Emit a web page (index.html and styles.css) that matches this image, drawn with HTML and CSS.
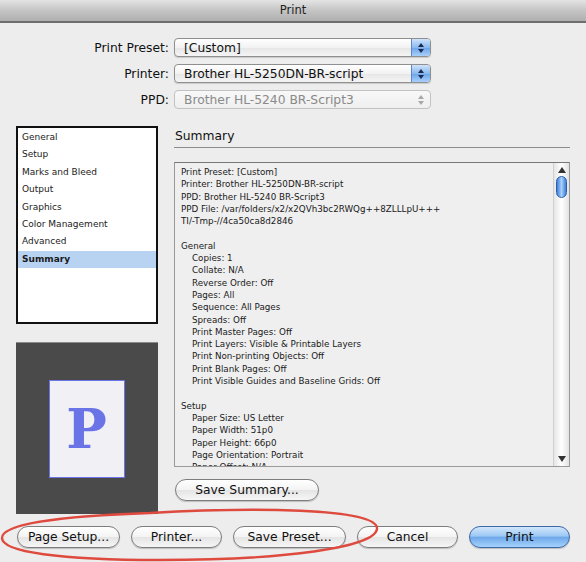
FILE: index.html
```html
<!DOCTYPE html>
<html>
<head>
<meta charset="utf-8">
<link rel="stylesheet" href="styles.css">
</head>
<body>
<div class="window">
  <div class="titlebar">Print</div>
  <div class="top">
    <div class="row">
      <span class="label">Print Preset:</span>
      <div class="popup"><span class="ptext">[Custom]</span><span class="arrows"><svg width="8" height="12" viewBox="0 0 8 12"><path d="M4 1 L7 5 H1 Z M4 11 L7 7 H1 Z" fill="#1a2a50"/></svg></span></div>
    </div>
    <div class="row">
      <span class="label">Printer:</span>
      <div class="popup"><span class="ptext">Brother HL-5250DN-BR-script</span><span class="arrows"><svg width="8" height="12" viewBox="0 0 8 12"><path d="M4 1 L7 5 H1 Z M4 11 L7 7 H1 Z" fill="#1a2a50"/></svg></span></div>
    </div>
    <div class="row">
      <span class="label">PPD:</span>
      <div class="popup disabled"><span class="ptext">Brother HL-5240 BR-Script3</span><span class="arrows"><svg width="8" height="12" viewBox="0 0 8 12"><path d="M4 1 L7 5 H1 Z M4 11 L7 7 H1 Z" fill="#a8a8a8"/></svg></span></div>
    </div>
  </div>
  <div class="main">
    <div class="sidebar">
      <ul class="list">
        <li>General</li>
        <li>Setup</li>
        <li>Marks and Bleed</li>
        <li>Output</li>
        <li>Graphics</li>
        <li>Color Management</li>
        <li>Advanced</li>
        <li class="sel">Summary</li>
      </ul>
      <div class="preview">
        <div class="page">P</div>
      </div>
    </div>
    <div class="content">
      <div class="heading">Summary</div>
      <div class="textbox">
        <div class="text">
          <div>Print Preset: [Custom]</div>
          <div>Printer: Brother HL-5250DN-BR-script</div>
          <div>PPD: Brother HL-5240 BR-Script3</div>
          <div>PPD File: /var/folders/x2/x2QVh3bc2RWQg++8ZLLLpU+++</div>
          <div>TI/-Tmp-//4ca50ca8d2846</div>
          <div class="blank"></div>
          <div>General</div>
          <div class="ind">Copies: 1</div>
          <div class="ind">Collate: N/A</div>
          <div class="ind">Reverse Order: Off</div>
          <div class="ind">Pages: All</div>
          <div class="ind">Sequence: All Pages</div>
          <div class="ind">Spreads: Off</div>
          <div class="ind">Print Master Pages: Off</div>
          <div class="ind">Print Layers: Visible &amp; Printable Layers</div>
          <div class="ind">Print Non-printing Objects: Off</div>
          <div class="ind">Print Blank Pages: Off</div>
          <div class="ind">Print Visible Guides and Baseline Grids: Off</div>
          <div class="blank"></div>
          <div>Setup</div>
          <div class="ind">Paper Size: US Letter</div>
          <div class="ind">Paper Width: 51p0</div>
          <div class="ind">Paper Height: 66p0</div>
          <div class="ind">Page Orientation: Portrait</div>
          <div class="ind">Paper Offset: N/A</div>
        </div>
        <div class="scrollbar">
          <svg class="sarrow" width="8" height="6" viewBox="0 0 8 6"><path d="M4 0 L8 6 H0 Z" fill="#333"/></svg>
          <div class="thumb"></div>
          <div class="track"></div>
          <svg class="sarrow" width="8" height="6" viewBox="0 0 8 6"><path d="M4 6 L8 0 H0 Z" fill="#333"/></svg>
        </div>
      </div>
      <div class="btnrow"><button class="btn summary">Save Summary...</button></div>
    </div>
  </div>
  <div class="buttons">
    <button class="btn w103">Page Setup...</button>
    <button class="btn w91">Printer...</button>
    <button class="btn w113">Save Preset...</button>
    <button class="btn w101">Cancel</button>
    <button class="btn w101 primary">Print</button>
  </div>
  <svg class="annot" width="586" height="562" viewBox="0 0 586 562">
    <path d="M 150 513 C 250 507, 375 508, 377 528 C 378 548, 280 560, 160 560 C 60 560, 2 552, 2 538 C 2 524, 60 516, 150 513 Z" fill="none" stroke="#de4a3e" stroke-width="2.4"/>
  </svg>
</div>
</body>
</html>
```
FILE: styles.css
```css
* { box-sizing: border-box; }
html, body { margin: 0; padding: 0; }
body {
  width: 586px;
  height: 562px;
  overflow: hidden;
  background: #ededed;
  font-family: "DejaVu Sans", sans-serif;
  color: #111;
}
.window {
  position: relative;
  width: 586px;
  height: 562px;
  background: #ededed;
}
.titlebar {
  height: 23px;
  background: linear-gradient(#e4e4e4, #c4c4c4 50%, #b0b0b0);
  border-bottom: 2px solid #6e6e6e;
  text-align: center;
  font-size: 11.5px;
  line-height: 21px;
  color: #222;
}
.top {
  padding-top: 15px;
  display: flex;
  flex-direction: column;
  gap: 7px;
}
.row {
  display: flex;
  align-items: center;
  height: 19px;
}
.label {
  width: 174px;
  text-align: right;
  font-size: 12.3px;
  padding-right: 5px;
  color: #111;
}
.popup {
  width: 257px;
  height: 19px;
  border: 1px solid #8f8f8f;
  border-radius: 4px;
  background: linear-gradient(#ffffff, #f2f2f2 50%, #e6e6e6 51%, #f4f4f4);
  display: flex;
  align-items: center;
  overflow: hidden;
  box-shadow: 0 1px 1px rgba(0,0,0,0.15);
}
.ptext {
  flex: 1;
  padding-left: 9px;
  font-size: 12.3px;
  color: #111;
  white-space: nowrap;
}
.arrows {
  width: 19px;
  height: 100%;
  display: flex;
  align-items: center;
  justify-content: center;
  border-left: 1px solid #5c87c8;
  background: linear-gradient(#cfe3fa, #8ab9ef 50%, #6aa3ea 51%, #a9d0fb);
}
.popup.disabled {
  border-color: #c2c2c2;
  box-shadow: none;
  background: linear-gradient(#f8f8f8, #efefef);
}
.popup.disabled .ptext { color: #8a8a8a; }
.popup.disabled .arrows {
  background: transparent;
  border-left: none;
}
.main {
  display: flex;
  gap: 16px;
  margin-top: 17px;
  padding-left: 16px;
  height: 388px;
}
.sidebar {
  width: 142px;
  display: flex;
  flex-direction: column;
  gap: 18px;
}
.list {
  list-style: none;
  margin: 0;
  padding: 1px 0 0 0;
  height: 198px;
  background: #fff;
  border: 2px solid #111;
  font-size: 9px;
}
.list li {
  height: 17.4px;
  line-height: 17.4px;
  padding-left: 4px;
  color: #222;
}
.list li.sel {
  background: #b8d3f2;
  font-weight: bold;
  color: #1a1a1a;
}
.preview {
  height: 172px;
  background: #4a4a4a;
  border-top: 1px solid #8a8a8a;
  display: flex;
  align-items: center;
  justify-content: center;
}
.page {
  width: 76px;
  height: 98px;
  margin-right: 1px;
  background: #f0f0f5;
  border: 1px solid #6b74e6;
  color: #6b74e6;
  font-family: "DejaVu Serif", "Liberation Serif", serif;
  font-weight: bold;
  font-size: 54px;
  line-height: 96px;
  text-align: center;
}
.content {
  width: 396px;
  display: flex;
  flex-direction: column;
}
.heading {
  height: 22px;
  font-size: 12.3px;
  line-height: 20px;
  padding-left: 1px;
  border-bottom: 1px solid #8c8c8c;
  color: #111;
}
.textbox {
  margin-top: 14px;
  height: 305px;
  background: #efefef;
  border: 1px solid #9a9a9a;
  border-top-color: #777;
  display: flex;
  overflow: hidden;
}
.text {
  flex: 1;
  padding: 3px 0 0 6px;
  font-size: 8.75px;
  line-height: 12.3px;
  color: #1a1a1a;
  white-space: nowrap;
}
.text .blank { height: 12.3px; }
.text .ind { padding-left: 11px; }
.scrollbar {
  width: 16px;
  display: flex;
  flex-direction: column;
  align-items: center;
  background: linear-gradient(90deg, #e6e6e6, #ffffff 50%, #e2e2e2);
  border-left: 1px solid #cfcfcf;
  padding: 4px 0 4px;
}
.sarrow { flex: none; }
.thumb {
  width: 11px;
  height: 22px;
  margin-top: 3px;
  border-radius: 6px;
  border: 1px solid #2a5fb0;
  background: linear-gradient(90deg, #3f7fd8, #a9d1fb 50%, #3f7fd8);
}
.track { flex: 1; }
.btnrow {
  margin-top: 12px;
  height: 22px;
}
.btn {
  height: 22px;
  border: 1px solid #7d7d7d;
  border-radius: 11px;
  background: linear-gradient(#ffffff, #f3f3f3 50%, #e4e4e4 51%, #f6f6f6);
  font-family: "DejaVu Sans", sans-serif;
  font-size: 12.3px;
  color: #111;
  padding: 0;
  box-shadow: 0 1px 1px rgba(0,0,0,0.2);
}
.btn.summary { width: 144px; margin-left: 1px; }
.buttons {
  display: flex;
  gap: 11px;
  padding-left: 17px;
  margin-top: 12px;
}
.w103 { width: 103px; }
.w91 { width: 91px; }
.w113 { width: 113px; }
.w101 { width: 101px; }
.btn.primary {
  border-color: #3d68a8;
  background: linear-gradient(#d2e6fb, #9cc8f4 45%, #6fa9ea 52%, #a4d2fb);
}
.annot {
  position: absolute;
  left: 0;
  top: 0;
  pointer-events: none;
}
```
